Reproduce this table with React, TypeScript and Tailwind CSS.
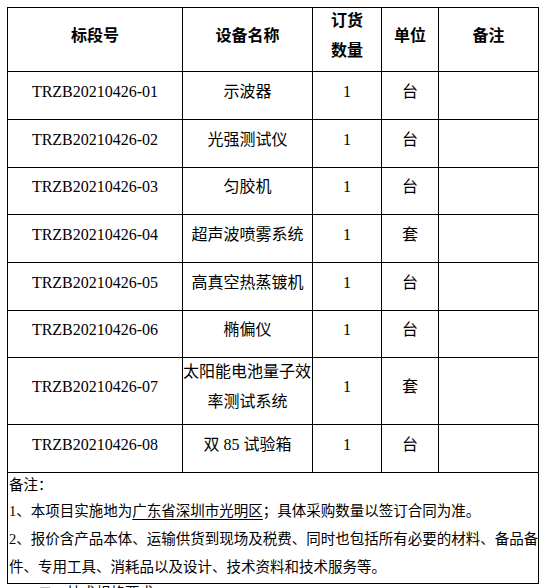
import * as React from "react";

type Row = { code: string; name: React.ReactNode; qty: string; unit: string; h: string };

const ROWS: Row[] = [
  { code: "TRZB20210426-01", name: "示波器", qty: "1", unit: "台", h: "h-[47px]" },
  { code: "TRZB20210426-02", name: "光强测试仪", qty: "1", unit: "台", h: "h-[47px]" },
  { code: "TRZB20210426-03", name: "匀胶机", qty: "1", unit: "台", h: "h-[46px]" },
  { code: "TRZB20210426-04", name: "超声波喷雾系统", qty: "1", unit: "套", h: "h-[47px]" },
  { code: "TRZB20210426-05", name: "高真空热蒸镀机", qty: "1", unit: "台", h: "h-[47px]" },
  { code: "TRZB20210426-06", name: "椭偏仪", qty: "1", unit: "台", h: "h-[46px]" },
  {
    code: "TRZB20210426-07",
    name: (
      <>
        <span className="block h-[30px] text-left -ml-[1px] whitespace-nowrap">太阳能电池量子效</span>
        <span className="block h-[30px]">率测试系统</span>
      </>
    ),
    qty: "1",
    unit: "套",
    h: "h-[66px]",
  },
  { code: "TRZB20210426-08", name: "双 85 试验箱", qty: "1", unit: "台", h: "h-[47px]" },
];

// every cell: fixed-height box, text centred a bit above the middle
function Cell({ h, children }: { h: string; children?: React.ReactNode }) {
  return (
    <td className="border border-black p-0 align-top">
      <div className={`${h} flex flex-col justify-center items-center pb-[8px] overflow-visible`}>
        <div className="leading-[30px] text-center">{children}</div>
      </div>
    </td>
  );
}

export default function App() {
  return (
    <div
      className="bg-white text-black h-[588px] w-[548px] overflow-hidden pl-[7px] pt-[7px]"
      style={{ fontFamily: '"Liberation Serif", "Noto Sans CJK SC", serif' }}
    >
      <table className="table-fixed border-collapse w-[531px] text-[16px]">
        <colgroup>
          <col className="w-[175px]" />
          <col className="w-[130px]" />
          <col className="w-[69px]" />
          <col className="w-[57px]" />
          <col className="w-[100px]" />
        </colgroup>
        <tbody>
          <tr className="font-bold">
            <Cell h="h-[63px]">标段号</Cell>
            <Cell h="h-[63px]">设备名称</Cell>
            <Cell h="h-[63px]">
              <span className="block h-[30px]">订货</span>
              <span className="block h-[30px]">数量</span>
            </Cell>
            <Cell h="h-[63px]">单位</Cell>
            <Cell h="h-[63px]">备注</Cell>
          </tr>
          {ROWS.map((r) => (
            <tr key={r.code}>
              <Cell h={r.h}>{r.code}</Cell>
              <Cell h={r.h}>{r.name}</Cell>
              <Cell h={r.h}>{r.qty}</Cell>
              <Cell h={r.h}>{r.unit}</Cell>
              <Cell h={r.h} />
            </tr>
          ))}
          <tr>
            <td colSpan={5} className="border border-black p-0 align-top text-left text-[14.5px] whitespace-nowrap">
              <div className="h-[110px] pl-[1px]">
                <div className="h-[24px] leading-[24px]">备注：</div>
                <div className="h-[28px] leading-[28px]">
                  1、本项目实施地为
                  <span className="underline underline-offset-[3px]">广东省深圳市光明区</span>
                  ；具体采购数量以签订合同为准。
                </div>
                <div className="h-[28px] leading-[28px]">
                  2、报价含产品本体、运输供货到现场及税费、同时也包括所有必要的材料、备品备
                </div>
                <div className="h-[28px] leading-[28px]">件、专用工具、消耗品以及设计、技术资料和技术服务等。</div>
              </div>
            </td>
          </tr>
        </tbody>
      </table>
      <div className="pl-[31px] text-[14.5px] leading-[18px] whitespace-nowrap">二、技术规格要求</div>
    </div>
  );
}
